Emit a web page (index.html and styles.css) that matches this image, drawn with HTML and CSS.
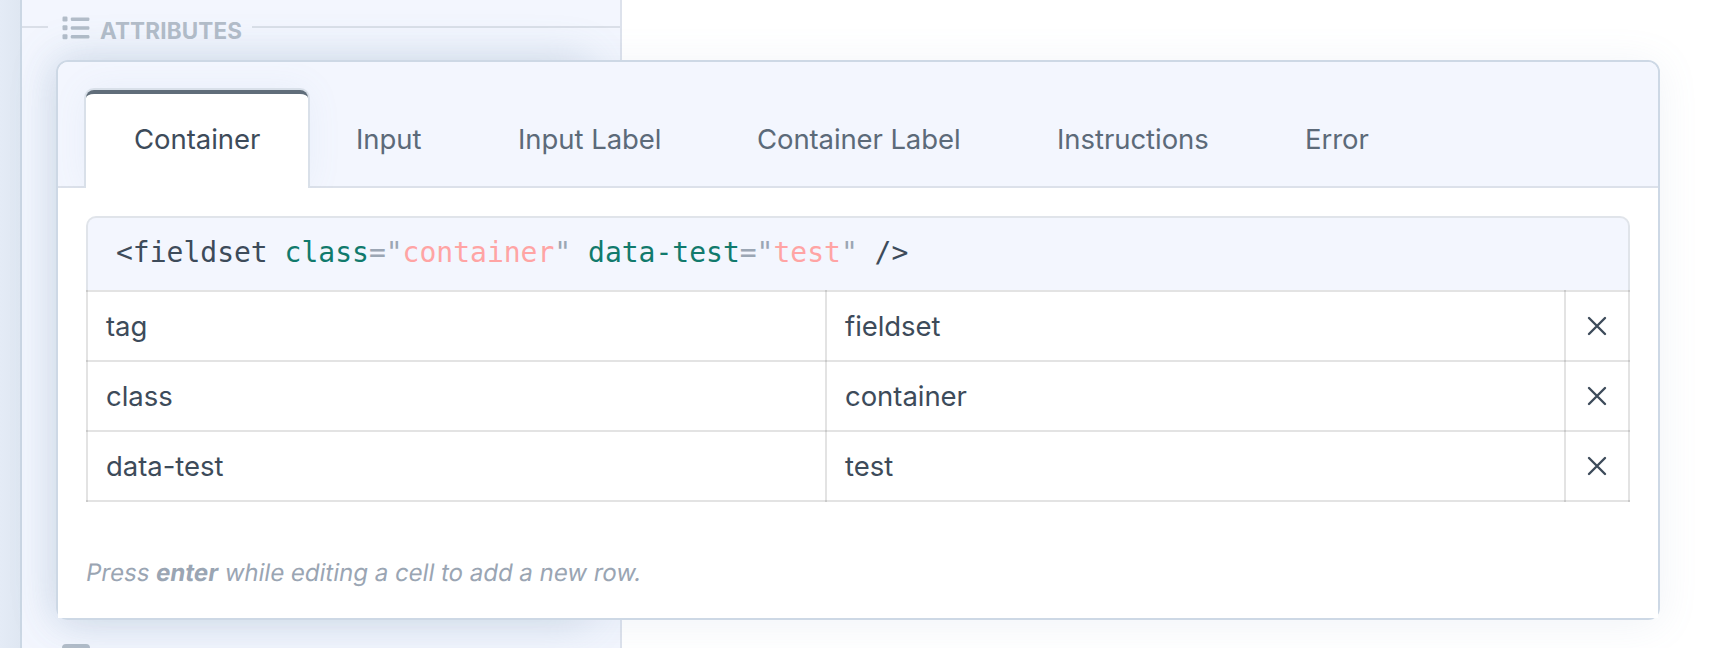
FILE: index.html
```html
<!DOCTYPE html>
<html lang="en">
<head>
<meta charset="utf-8">
<title>Attributes</title>
<link rel="stylesheet" href="styles.css">
</head>
<body>
<div class="app">
  <div class="rail"></div>
  <aside class="panel">
    <div class="section-title">
      <svg class="list-icon" width="28" height="24" viewBox="0 0 28 24" fill="currentColor">
        <rect x="0.5" y="0.5" width="5" height="5" rx="1.2"/><rect x="0.5" y="9.3" width="5" height="5" rx="1.2"/><rect x="0.5" y="18.2" width="5" height="5" rx="1.2"/>
        <rect x="8.8" y="1.4" width="18.6" height="3.5" rx="1.2"/><rect x="8.8" y="10.2" width="18.6" height="3.5" rx="1.2"/><rect x="8.8" y="19" width="18.6" height="3.5" rx="1.2"/>
      </svg>
      <span class="section-name">ATTRIBUTES</span>
    </div>
    <div class="next-icon"></div>
  </aside>
</div>
<div class="glow"></div>
<main class="card">
  <nav class="tabs">
    <a class="tab active">Container</a>
    <a class="tab input">Input</a>
    <a class="tab input-label">Input Label</a>
    <a class="tab container-label">Container Label</a>
    <a class="tab instructions">Instructions</a>
    <a class="tab error">Error</a>
  </nav>
  <div class="body">
    <div class="code">&lt;fieldset <span class="attr">class</span><span class="punc">="</span><span class="val">container</span><span class="punc">"</span> <span class="attr">data-test</span><span class="punc">="</span><span class="val">test</span><span class="punc">"</span> /&gt;</div>
    <div class="grid">
      <div class="row"><div class="cell">tag</div><div class="cell">fieldset</div><div class="cell remove"><svg width="20" height="20" viewBox="0 0 20 20"><path d="M2 2L18 18M18 2L2 18"/></svg></div></div>
      <div class="row"><div class="cell">class</div><div class="cell">container</div><div class="cell remove"><svg width="20" height="20" viewBox="0 0 20 20"><path d="M2 2L18 18M18 2L2 18"/></svg></div></div>
      <div class="row"><div class="cell">data-test</div><div class="cell">test</div><div class="cell remove"><svg width="20" height="20" viewBox="0 0 20 20"><path d="M2 2L18 18M18 2L2 18"/></svg></div></div>
    </div>
    <p class="hint">Press <b>enter</b> while editing a cell to add a new row.</p>
  </div>
</main>
</body>
</html>
```
FILE: styles.css
```css
* { box-sizing: border-box; }
body {
  margin: 0;
  height: 648px;
  overflow: hidden;
  position: relative;
  background: #fff;
  color: #3d4b5a;
  font: 27.5px/36px Inter, "Liberation Sans", sans-serif;
  letter-spacing: -0.05px;
}
.app { display: flex; height: 648px; }
.rail { width: 20px; background: linear-gradient(90deg, #e4ebf6, #dfe7f2); }
.panel {
  width: 602px;
  border-left: 2px solid #cbd7e4;
  border-right: 2px solid #dde2ec;
  background: #f3f6fe;
  overflow: hidden;
  display: flex;
  flex-direction: column;
  justify-content: space-between;
}
.section-title {
  display: flex;
  align-items: center;
  height: 54px;
  color: #b3bdc9;
}
.section-title::before { content: ""; width: 26px; height: 2px; background: #dadfe8; }
.section-title::after { content: ""; flex: 1; height: 2px; background: #dadfe8; }
.list-icon { margin: 2px 0 0 14px; }
.section-name {
  width: 152px;
  margin: 8px 0 0 10px;
  font-size: 22.5px;
  font-weight: 700;
  letter-spacing: 0.15px;
  white-space: nowrap;
}
.next-icon {
  width: 28px;
  height: 4px;
  margin-left: 40px;
  border-radius: 4px 4px 0 0;
  background: #b3bdc9;
}
.glow {
  position: absolute;
  left: 56px;
  top: 60px;
  width: 532px;
  height: 560px;
  border-radius: 12px;
  box-shadow: 0 0 44px rgba(110, 145, 170, 0.26);
  clip-path: inset(-60px -34px -60px -56px);
}
.card {
  position: absolute;
  left: 56px;
  top: 60px;
  width: 1604px;
  height: 560px;
  border: 2px solid #cdd8e5;
  border-radius: 12px;
  background: #fff;
  box-shadow: 0 4px 40px rgba(120, 145, 185, 0.11);
}
.tabs {
  display: flex;
  height: 126px;
  padding: 28px 28px 0;
  border-bottom: 2px solid #dce1ea;
  border-radius: 10px 10px 0 0;
  background: #f3f6fe;
}
.tab {
  height: 98px;
  padding: 31px 0 0 48px;
  white-space: nowrap;
  color: #5c6a79;
}
.active {
  width: 222px;
  border-top: 4px solid #606d7a;
  padding-top: 27px;
  border-radius: 8px 8px 0 0;
  background: #fff;
  color: #3d4b5a;
  box-shadow: 0 0 0 2px #d9e0e9, 0 0 36px rgba(120, 160, 200, 0.09);
  clip-path: inset(-26px -40px 0 -28px);
}
.input { width: 162px; }
.input-label { width: 239px; }
.container-label { width: 300px; letter-spacing: -0.1px; }
.instructions { width: 248px; }
.error { width: 160px; }
.body {
  height: 430px;
  padding: 28px;
  background: #fff;
}
.code {
  height: 74px;
  padding: 17px 0 0 28px;
  border: 2px solid #e0e4ea;
  border-bottom: 0;
  border-radius: 10px 10px 0 0;
  background: #f3f6fe;
  font: 28px/36px "DejaVu Sans Mono", monospace;
  letter-spacing: 0;
  white-space: pre;
}
.attr { color: #117a6c; }
.punc { color: #9ba6b4; }
.val { color: #ffa4a4; }
/* Translucent rules overlap, so crossings are slightly darker. */
.grid { border-top: 2px solid rgba(0, 0, 0, 0.11); }
.row {
  display: grid;
  grid-template-columns: 739px 739px 66px;
  height: 70px;
  border-bottom: 2px solid rgba(0, 0, 0, 0.11);
}
.cell {
  height: 70px;
  padding: 16px 0 0 18px;
  border-left: 2px solid rgba(0, 0, 0, 0.11);
}
.row:first-child .cell { height: 72px; margin-top: -2px; padding-top: 18px; }
.cell.remove {
  padding: 24px 0 0 21px;
  border-right: 2px solid rgba(0, 0, 0, 0.11);
  line-height: 0;
}
.row:first-child .cell.remove { padding-top: 26px; }
.remove path { fill: none; stroke: #3d4b5a; stroke-width: 2.4; stroke-linecap: round; }
.hint {
  margin: 53px 0 0 -1px;
  color: #9aa5b3;
  font-size: 24px;
  letter-spacing: 0;
  transform: skewX(-9.5deg);
  transform-origin: 0 26px;
}
```
